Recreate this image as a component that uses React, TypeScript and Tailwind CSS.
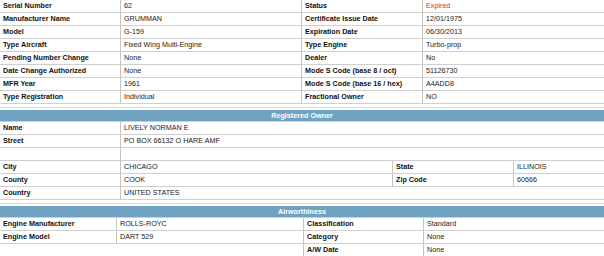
import React from "react";

const line = "border-b border-[#cfcfcf]";

function Label({ children, w = "w-[121px]" }: { children?: React.ReactNode; w?: string }) {
  return (
    <div className={`${w} flex shrink-0 items-center self-stretch border-r border-[#c4c4c4] pl-[3px] font-bold text-[#111]`}>
      {children}
    </div>
  );
}

function Value({ children, className = "" }: { children?: React.ReactNode; className?: string }) {
  return <div className={`flex-1 pl-[3px] ${className}`}>{children}</div>;
}

function Row({ children }: { children: React.ReactNode }) {
  return <div className={`flex h-[13px] items-center leading-[12px] ${line}`}>{children}</div>;
}

function Header({ title }: { title: string }) {
  return (
    <div className="mt-[3px] border-t border-[#d8d8d8] pt-[2px]">
      <div className={`h-[12px] bg-[#6fa3c1] text-center font-bold leading-[12px] text-white ${line}`}>
        {title}
      </div>
    </div>
  );
}

const general: [string, string, string, string][] = [
  ["Serial Number", "62", "Status", "Expired"],
  ["Manufacturer Name", "GRUMMAN", "Certificate Issue Date", "12/01/1975"],
  ["Model", "G-159", "Expiration Date", "06/30/2013"],
  ["Type Aircraft", "Fixed Wing Multi-Engine", "Type Engine", "Turbo-prop"],
  ["Pending Number Change", "None", "Dealer", "No"],
  ["Date Change Authorized", "None", "Mode S Code (base 8 / oct)", "51126730"],
  ["MFR Year", "1961", "Mode S Code (base 16 / hex)", "A4ADD8"],
  ["Type Registration", "Individual", "Fractional Owner", "NO"],
];

export default function App() {
  return (
    <div className="w-[604px] h-[256px] overflow-hidden bg-white font-['Liberation_Sans',Arial,sans-serif] text-[7.2px] text-[#1a1a1a]">
      {general.map(([l1, v1, l2, v2]) => (
        <Row key={l1}>
          <Label>{l1}</Label>
          <div className="flex w-[181px] shrink-0 self-stretch items-center border-r border-[#c4c4c4] pl-[3px]">{v1}</div>
          <Label>{l2}</Label>
          <Value className={l2 === "Status" ? "text-[#e8272a]" : ""}>{v2}</Value>
        </Row>
      ))}

      <Header title="Registered Owner" />
      <Row>
        <Label>Name</Label>
        <Value>LIVELY NORMAN E</Value>
      </Row>
      <Row>
        <Label>Street</Label>
        <Value>PO BOX 66132 O HARE AMF</Value>
      </Row>
      <Row>
        <Label />
        <Value />
      </Row>
      <Row>
        <Label>City</Label>
        <div className="w-[271px] shrink-0 pl-[3px]">CHICAGO</div>
        <Label w="w-[122px] border-l">State</Label>
        <Value>ILLINOIS</Value>
      </Row>
      <Row>
        <Label>County</Label>
        <div className="w-[271px] shrink-0 pl-[3px]">COOK</div>
        <Label w="w-[122px] border-l">Zip Code</Label>
        <Value>60666</Value>
      </Row>
      <Row>
        <Label>Country</Label>
        <Value>UNITED STATES</Value>
      </Row>

      <Header title="Airworthiness" />
      <Row>
        <Label w="w-[117px]">Engine Manufacturer</Label>
        <div className="w-[186px] shrink-0 pl-[3px]">ROLLS-ROYC</div>
        <Label w="w-[121px] border-l">Classification</Label>
        <Value>Standard</Value>
      </Row>
      <Row>
        <Label w="w-[117px]">Engine Model</Label>
        <div className="w-[186px] shrink-0 pl-[3px]">DART 529</div>
        <Label w="w-[121px] border-l">Category</Label>
        <Value>None</Value>
      </Row>
      <Row>
        <div className="w-[303px] shrink-0" />
        <Label w="w-[121px] border-l">A/W Date</Label>
        <Value>None</Value>
      </Row>
    </div>
  );
}
